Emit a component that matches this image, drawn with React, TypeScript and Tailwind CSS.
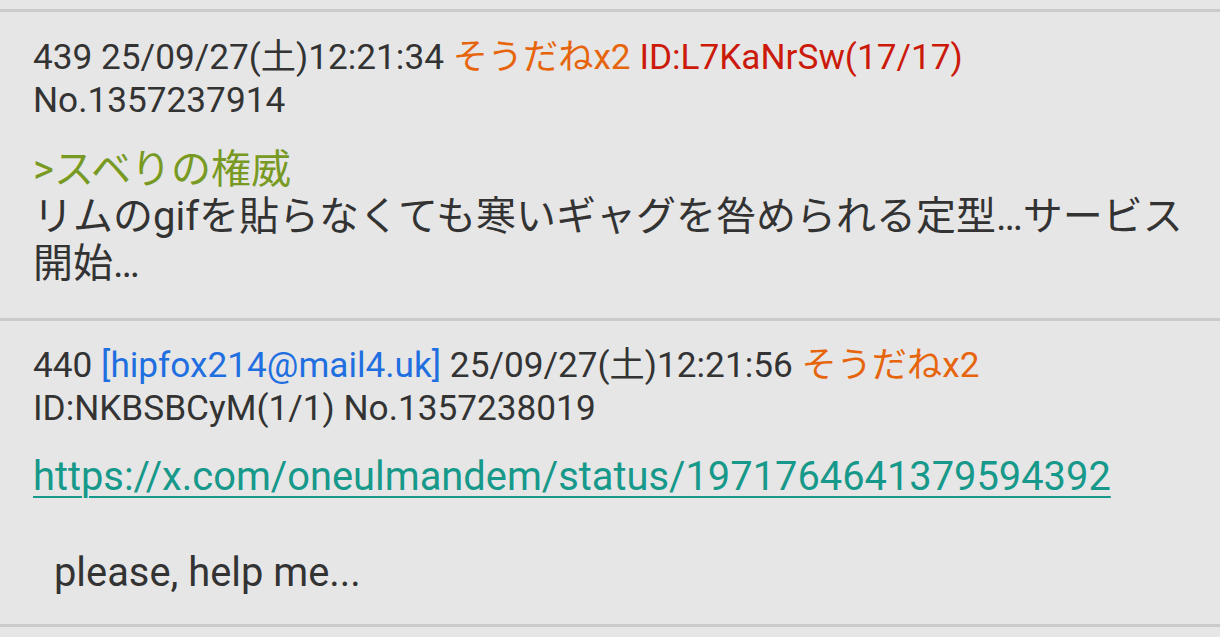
import React from 'react';

const font = { fontFamily: 'Roboto, "Noto Sans CJK JP", sans-serif' };

const Divider = () => <div className="h-[3px] bg-[#cbcbcb]" />;

export default function App() {
  return (
    <div className="w-[1220px] h-[637px] overflow-hidden bg-[#e6e6e6] text-[#333333]" style={font}>
      <div className="h-[9px]" />
      <Divider />

      {/* 439 */}
      <div className="pl-[33px] pr-4 pt-[24px] h-[306px]">
        <div className="text-[35.2px] leading-[43px]">
          <span>439 25/09/27(土)12:21:34 </span>
          <span className="text-[#e6650c]">そうだねx2</span>{' '}
          <span className="text-[#cc1a0a]">ID:L7KaNrSw(17/17)</span>
          <br />
          <span>No.1357237914</span>
        </div>
        <div className="mt-[24px] text-[40px] leading-[47px]">
          <div className="text-[#789922]">&gt;スベりの権威</div>
          <div>リムのgifを貼らなくても寒いギャグを咎められる定型…サービス開始…</div>
        </div>
      </div>

      <Divider />

      {/* 440 */}
      <div className="pl-[33px] pr-4 pt-[23px] h-[303px]">
        <div className="text-[35.2px] leading-[43px]">
          <span>440 </span>
          <span className="text-[#1f6fe0]">[hipfox214@mail4.uk]</span>
          <span> 25/09/27(土)12:21:56 </span>
          <span className="text-[#e6650c]">そうだねx2</span>
          <br />
          <span>ID:NKBSBCyM(1/1) No.1357238019</span>
        </div>
        <div className="mt-[23px] text-[39.85px] leading-[48px] whitespace-pre-wrap">
          <a className="text-[#16998a] underline underline-offset-[6px] decoration-[2px]">
            https://x.com/oneulmandem/status/1971764641379594392
          </a>
          {'\n\n'}
          <span className="pl-[21px]">please, help me...</span>
        </div>
      </div>

      <Divider />
    </div>
  );
}
